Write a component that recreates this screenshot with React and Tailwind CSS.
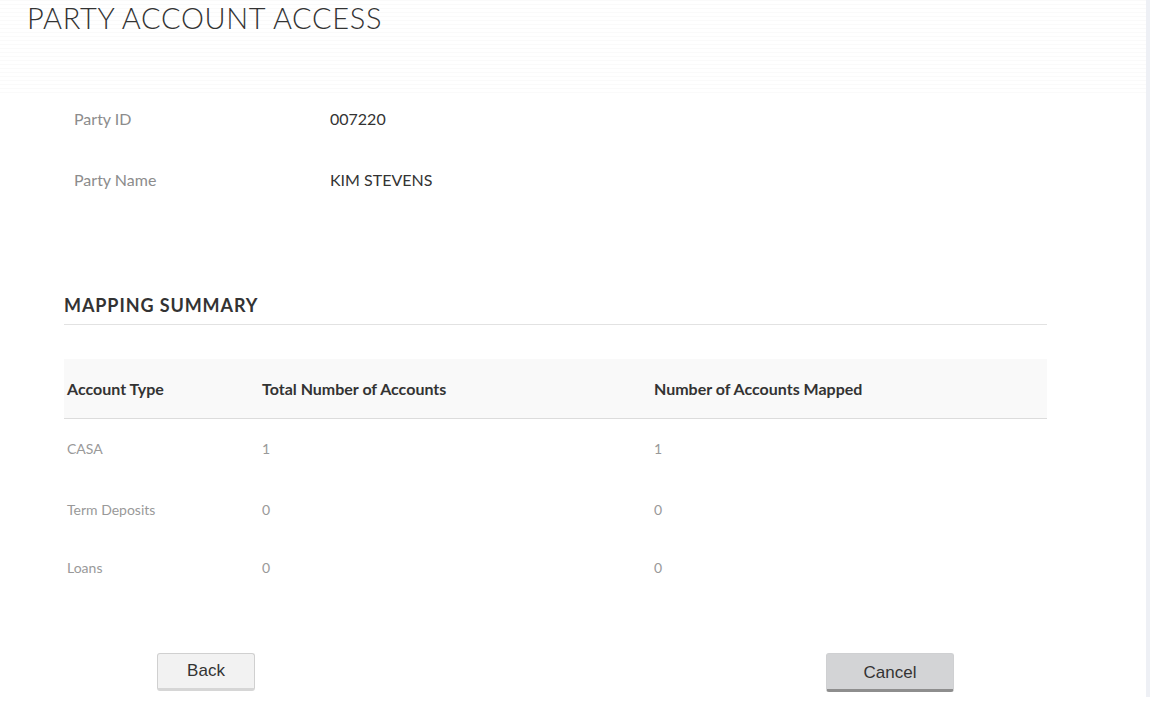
// Party account access - mapping summary view

const rows = [
  { type: 'CASA', total: '1', mapped: '1', h: 'h-[58px]' },
  { type: 'Term Deposits', total: '0', mapped: '0', h: 'h-[65px]' },
  { type: 'Loans', total: '0', mapped: '0', h: 'h-[50px]' },
]

export default function App() {
  return (
    <div className="flex h-[702px] w-[1150px] overflow-hidden bg-white font-['Lato','Open_Sans',sans-serif]">
      <div className="flex w-[1146px] flex-col">
        {/* page title */}
        <div className="h-[95px] bg-[repeating-linear-gradient(to_bottom,#fafafa_0px,#fafafa_1px,#ffffff_1px,#ffffff_4px)] pl-[27px]">
          <h1 className="text-[29px] font-light leading-[35px] tracking-[0.65px] text-[#333]">
            PARTY ACCOUNT ACCESS
          </h1>
        </div>

        {/* party details */}
        <div className="flex flex-col gap-[39px] pl-[74px] pt-[13px] text-[16px]">
          <div className="flex h-[22px] items-center">
            <span className="w-[256px] text-[#8c8c8c]">Party ID</span>
            <span className="text-[#333]">007220</span>
          </div>
          <div className="flex h-[22px] items-center">
            <span className="w-[256px] text-[#8c8c8c]">Party Name</span>
            <span className="text-[#333]">KIM STEVENS</span>
          </div>
        </div>

        {/* mapping summary */}
        <div className="ml-[64px] mt-[102px] w-[983px]">
          <h2 className="border-b border-[#e2e2e2] pb-[7px] text-[18px] font-bold leading-[24px] tracking-[0.9px] text-[#333]">
            MAPPING SUMMARY
          </h2>
          <div className="mt-[34px]">
            <div className="flex h-[60px] items-center border-b border-[#dcdcdc] bg-[#f9f9f9] text-[16px] font-bold text-[#333]">
              <span className="w-[198px] pl-[3px]">Account Type</span>
              <span className="w-[392px]">Total Number of Accounts</span>
              <span>Number of Accounts Mapped</span>
            </div>
            {rows.map((r) => (
              <div key={r.type} className={`flex items-center text-[14px] text-[#999] ${r.h}`}>
                <span className="w-[198px] pl-[3px]">{r.type}</span>
                <span className="w-[392px]">{r.total}</span>
                <span>{r.mapped}</span>
              </div>
            ))}
          </div>
        </div>

        {/* actions */}
        <div className="mt-[61px] flex items-start font-['Liberation_Sans',Arial,sans-serif] text-[17px] text-[#333]">
          <button className="ml-[157px] h-[38px] w-[98px] rounded-[3px] border border-[#d0d0d0] border-b-[3px] border-b-[#d6d6d6] bg-[#f2f2f2]">
            Back
          </button>
          <button className="ml-[571px] h-[39px] w-[128px] rounded-[3px] border border-[#cfd0d2] border-b-[3px] border-b-[#8e8e8e] bg-[#d3d4d6] pt-[2px]">
            Cancel
          </button>
        </div>
      </div>
      {/* scrollbar strip */}
      <div className="h-[697px] w-[4px] bg-[#eef0f5]" />
    </div>
  )
}
